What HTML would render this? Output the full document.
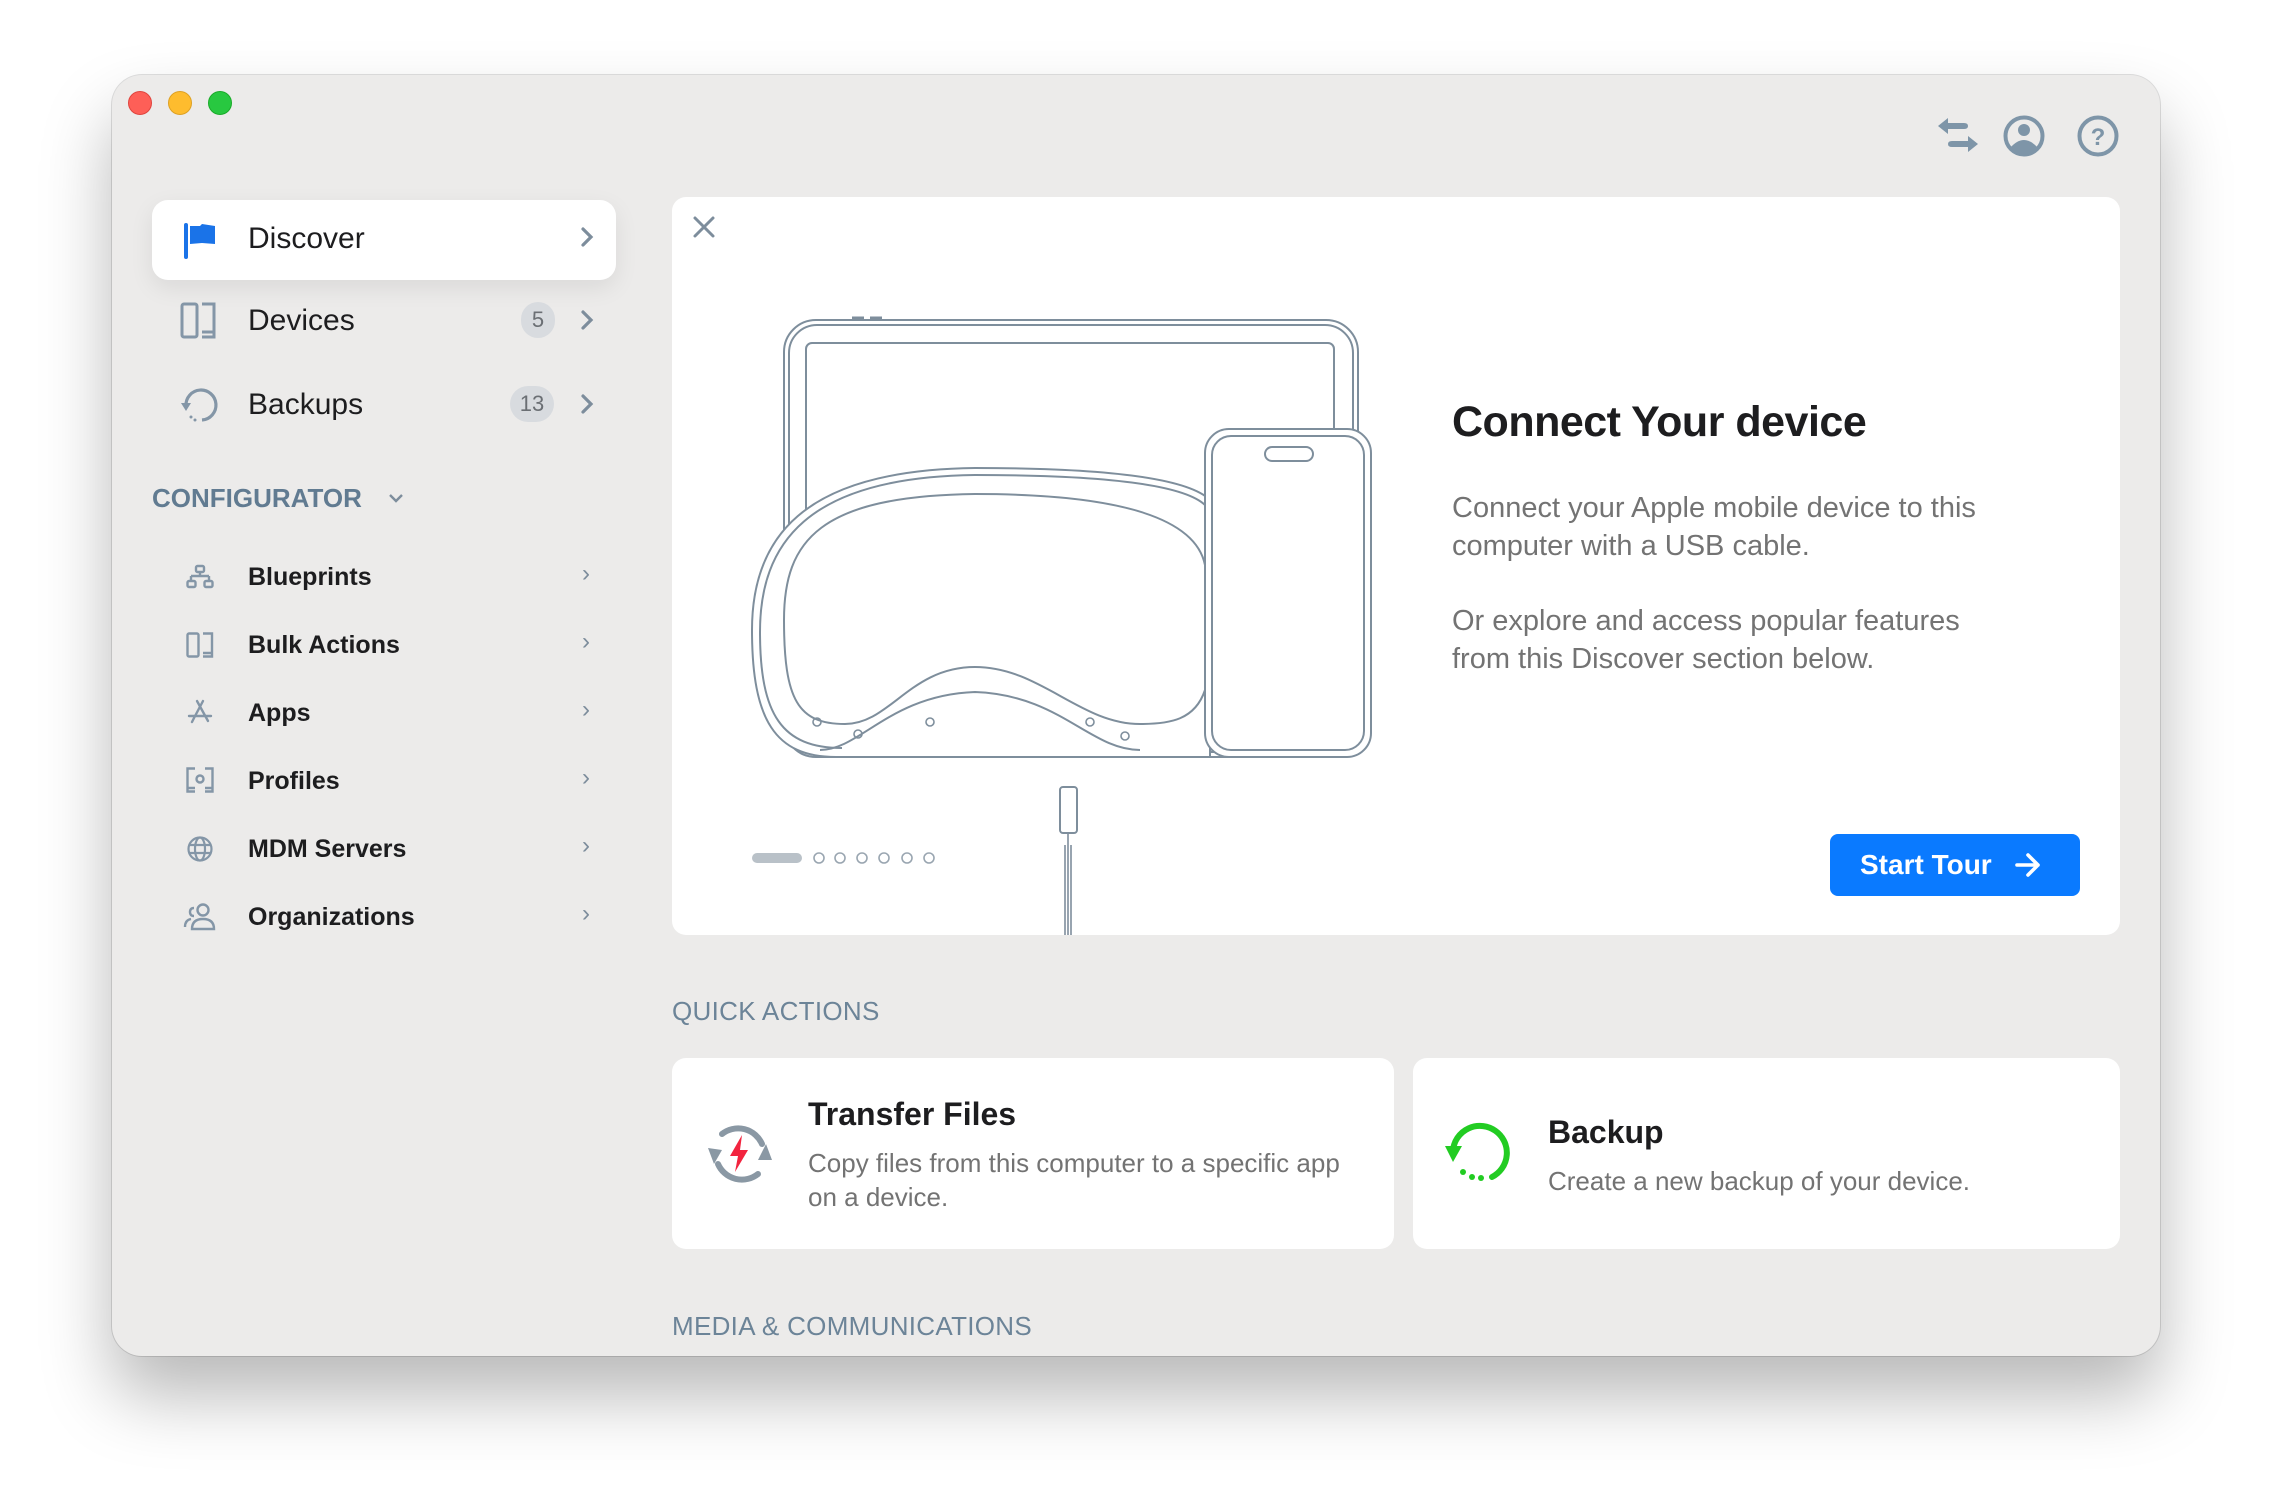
<!DOCTYPE html>
<html><head><meta charset="utf-8"><style>
*{margin:0;padding:0;box-sizing:border-box}
body{width:2272px;height:1504px;background:#fff;font-family:"Liberation Sans",sans-serif;position:relative;overflow:hidden}
.win{position:absolute;left:112px;top:75px;width:2048px;height:1281px;background:#ecebea;border-radius:30px;box-shadow:0 40px 70px rgba(0,0,0,.28),0 0 0 1px rgba(0,0,0,.12);overflow:hidden}
.a{position:absolute}
.tl{position:absolute;top:91px;width:24px;height:24px;border-radius:50%}
.side{position:absolute;font-size:30px;color:#1d1d1f}
.cfg{font-size:25px;font-weight:bold;color:#1d1d1f}
.chev{position:absolute;color:#7d8d9c}
.badge{position:absolute;height:36px;border-radius:18px;background:#d8dbdf;color:#6b6f74;font-size:22px;text-align:center;line-height:36px}
.card{position:absolute;background:#fff;border-radius:14px}
.gray{color:#737373}
.hdr{position:absolute;font-size:26px;color:#6c8498;letter-spacing:.3px}
</style></head><body>
<div class="win"></div>
<div class="tl" style="left:128px;background:#fe5f57;border:1px solid #e0443e"></div>
<div class="tl" style="left:168px;background:#febc2e;border:1px solid #dea123"></div>
<div class="tl" style="left:208px;background:#28c840;border:1px solid #1aab29"></div>

<svg class="a" style="left:1936px;top:114px" width="190" height="46" viewBox="0 0 190 46">
 <g fill="#7e95a8">
  <path d="M2 12 L12 4 L12 9 L28 9 Q32 9 32 12 Q32 15 28 15 L12 15 L12 20 Z"/>
  <path d="M42 30 L32 22 L32 27 L16 27 Q12 27 12 30 Q12 33 16 33 L32 33 L32 38 Z"/>
 </g>
 <circle cx="88" cy="22" r="18.5" fill="none" stroke="#7e95a8" stroke-width="4"/>
 <circle cx="88" cy="16" r="6" fill="#7e95a8"/>
 <path d="M74 34 Q88 18 102 34 Q88 46 74 34Z" fill="#7e95a8"/>
 <circle cx="162" cy="22" r="18.5" fill="none" stroke="#7e95a8" stroke-width="4"/>
 <text x="162" y="31" text-anchor="middle" font-family="Liberation Sans" font-weight="bold" font-size="24" fill="#7e95a8">?</text>
</svg>

<div class="a" style="left:152px;top:200px;width:464px;height:80px;background:#fff;border-radius:16px;box-shadow:0 8px 24px rgba(0,0,0,.08)"></div>
<svg class="a" style="left:182px;top:222px" width="36" height="38" viewBox="0 0 36 38"><rect x="2" y="1" width="4" height="36" rx="2" fill="#1a73e8"/><path d="M8 4 L18 4 L20 2 L33 4 L33 22 L20 21 L8 22Z" fill="#1a73e8"/></svg>
<div class="side" style="left:248px;top:222px">Discover</div>
<svg class="a" style="left:580px;top:226px" width="14" height="22" viewBox="0 0 14 22"><path d="M3 3 L11 11 L3 19" fill="none" stroke="#7d8d9c" stroke-width="3.2" stroke-linecap="round"/></svg>

<svg class="a" style="left:180px;top:302px" width="38" height="38" viewBox="0 0 38 38" fill="none" stroke="#8496a7" stroke-width="3"><rect x="2" y="2" width="15" height="33" rx="2"/><path d="M22 2 H34 V35 H22"/><path d="M22 30 H34" /></svg>
<div class="side" style="left:248px;top:304px">Devices</div>
<div class="badge" style="left:521px;top:302px;width:34px">5</div>
<svg class="a" style="left:580px;top:309px" width="14" height="22" viewBox="0 0 14 22"><path d="M3 3 L11 11 L3 19" fill="none" stroke="#7d8d9c" stroke-width="3.2" stroke-linecap="round"/></svg>

<svg class="a" style="left:178px;top:384px" width="42" height="42" viewBox="0 0 42 42" fill="none" stroke="#8496a7" stroke-width="3.2"><path d="M8 22 A15 15 0 1 1 24 36"/><path d="M3 19 L8 27 L13 19" fill="#8496a7" stroke="none"/><circle cx="13" cy="33" r="1.5" fill="#8496a7" stroke="none"/><circle cx="17" cy="36" r="1.5" fill="#8496a7" stroke="none"/></svg>
<div class="side" style="left:248px;top:388px">Backups</div>
<div class="badge" style="left:510px;top:386px;width:44px">13</div>
<svg class="a" style="left:580px;top:393px" width="14" height="22" viewBox="0 0 14 22"><path d="M3 3 L11 11 L3 19" fill="none" stroke="#7d8d9c" stroke-width="3.2" stroke-linecap="round"/></svg>

<div class="a" style="left:152px;top:483px;font-size:26px;font-weight:bold;color:#617b91">CONFIGURATOR</div>
<svg class="a" style="left:388px;top:492px" width="16" height="12" viewBox="0 0 16 12"><path d="M2 3 L8 9 L14 3" fill="none" stroke="#7d8d9c" stroke-width="2.4"/></svg>

<svg class="a" style="left:186px;top:564px" width="28" height="26" viewBox="0 0 28 26" fill="none" stroke="#8496a7" stroke-width="2.4"><rect x="10" y="2" width="8" height="6" rx="1.5"/><path d="M14 8 V12 M5 12 H23 M5 12 V17 M23 12 V17"/><rect x="1.5" y="17" width="8" height="6" rx="1.5"/><rect x="18.5" y="17" width="8" height="6" rx="1.5"/></svg>
<div class="a cfg" style="left:248px;top:563px">Blueprints</div>
<svg class="a" style="left:186px;top:632px" width="28" height="26" viewBox="0 0 28 26" fill="none" stroke="#8496a7" stroke-width="2.4"><rect x="1.5" y="1.5" width="11" height="23" rx="1.5"/><path d="M17 1.5 H26 V24.5 H17 M17 21 H26"/></svg>
<div class="a cfg" style="left:248px;top:631px">Bulk Actions</div>
<svg class="a" style="left:186px;top:699px" width="28" height="26" viewBox="0 0 28 26" fill="none" stroke="#8496a7" stroke-width="2.4" stroke-linecap="round"><path d="M11 2 L22 22 M17 2 L8 19 M3 17 H25 M6 23 L8 19"/></svg>
<div class="a cfg" style="left:248px;top:699px">Apps</div>
<svg class="a" style="left:186px;top:767px" width="28" height="26" viewBox="0 0 28 26" fill="none" stroke="#8496a7" stroke-width="2.4"><path d="M9 1.5 H1.5 V24.5 H9 M19 1.5 H26.5 V24.5 H19 M1.5 21 H9 M19 21 H26.5"/><circle cx="14" cy="12" r="3.5"/></svg>
<div class="a cfg" style="left:248px;top:767px">Profiles</div>
<svg class="a" style="left:186px;top:835px" width="28" height="28" viewBox="0 0 28 28" fill="none" stroke="#8496a7" stroke-width="2.2"><circle cx="14" cy="14" r="11.5"/><ellipse cx="14" cy="14" rx="5" ry="11.5"/><path d="M3 10 H25 M3 18 H25"/></svg>
<div class="a cfg" style="left:248px;top:835px">MDM Servers</div>
<svg class="a" style="left:183px;top:902px" width="34" height="30" viewBox="0 0 34 30" fill="none" stroke="#8496a7" stroke-width="2.4"><circle cx="20" cy="8" r="5.5"/><path d="M9 27 Q9 17 20 17 Q31 17 31 27 Z"/><path d="M11 6 Q7 6 7 10 Q7 14 11 14 M2 25 Q2 18 8 17"/></svg>
<div class="a cfg" style="left:248px;top:903px">Organizations</div>
<div class="chev" style="left:582px;top:560px;font-size:24px">›</div>
<div class="chev" style="left:582px;top:628px;font-size:24px">›</div>
<div class="chev" style="left:582px;top:696px;font-size:24px">›</div>
<div class="chev" style="left:582px;top:764px;font-size:24px">›</div>
<div class="chev" style="left:582px;top:832px;font-size:24px">›</div>
<div class="chev" style="left:582px;top:900px;font-size:24px">›</div>

<div class="card" style="left:672px;top:197px;width:1448px;height:738px"></div>
<svg class="a" style="left:692px;top:215px" width="24" height="24" viewBox="0 0 24 24"><path d="M3 3 L21 21 M21 3 L3 21" stroke="#7d8d9c" stroke-width="3" stroke-linecap="round"/></svg>

<svg class="a" style="left:672px;top:197px" width="760" height="738" viewBox="672 197 760 738" fill="none" stroke="#7e8e9c" stroke-width="2">
 <rect x="784" y="320" width="574" height="437" rx="32"/>
 <rect x="789" y="325" width="564" height="427" rx="28"/>
 <rect x="806" y="343" width="528" height="370" rx="6"/>
 <path d="M852 318 H864 M870 318 H882" stroke-width="3"/>
 <path fill="#fff" d="M836 757 C775 757 752 720 752 630 C752 540 800 470 975 468 C1120 468 1190 480 1210 500 L1210 757 Z"/>
 <path d="M842 748 C782 748 760 715 760 632 C760 545 805 477 975 475 C1115 475 1185 486 1205 505"/>
 <path d="M845 724 C798 724 784 700 784 620 C784 540 820 496 975 494 C1110 494 1195 515 1205 565 L1205 690 C1195 720 1170 724 1140 724 C1080 724 1040 667 975 667 C910 667 890 724 845 724 Z"/>
 <path d="M820 750 C860 750 890 695 975 692 C1060 695 1090 750 1140 750"/>
 <g stroke-width="1.6"><circle cx="817" cy="722" r="4"/><circle cx="858" cy="734" r="4"/><circle cx="930" cy="722" r="4"/><circle cx="1090" cy="722" r="4"/><circle cx="1125" cy="736" r="4"/></g>
 <rect fill="#fff" x="1205" y="429" width="166" height="328" rx="24"/>
 <rect x="1212" y="436" width="152" height="314" rx="19"/>
 <rect x="1265" y="447" width="48" height="14" rx="7"/>
 <rect x="1060" y="787" width="17" height="46" rx="3"/>
 <path d="M1068 833 V935 M1065 845 V935 M1071 845 V935" stroke-width="1.6"/>
</svg>
<div class="a" style="left:752px;top:853px;width:50px;height:10px;border-radius:5px;background:#b9c1c8"></div>
<svg class="a" style="left:812px;top:850px" width="130" height="16" viewBox="0 0 130 16" fill="none" stroke="#9aa6b1" stroke-width="1.6"><circle cx="7" cy="8" r="5"/><circle cx="28" cy="8" r="5"/><circle cx="50" cy="8" r="5"/><circle cx="72" cy="8" r="5"/><circle cx="95" cy="8" r="5"/><circle cx="117" cy="8" r="5"/></svg>

<div class="a" style="left:1452px;top:398px;font-size:43px;font-weight:bold;color:#1d1d1f;letter-spacing:-.5px">Connect Your device</div>
<div class="a gray" style="left:1452px;top:489px;font-size:29px;line-height:38px;width:590px">Connect your Apple mobile device to this computer with a USB cable.</div>
<div class="a gray" style="left:1452px;top:602px;font-size:29px;line-height:38px;width:560px">Or explore and access popular features from this Discover section below.</div>
<div class="a" style="left:1830px;top:834px;width:250px;height:62px;background:#0a7aff;border-radius:8px"></div>
<div class="a" style="left:1860px;top:849px;font-size:28px;font-weight:bold;color:#fff">Start Tour</div>
<svg class="a" style="left:2014px;top:852px" width="28" height="26" viewBox="0 0 28 26"><path d="M3 13 H24 M14 3 L24 13 L14 23" fill="none" stroke="#fff" stroke-width="3.6" stroke-linecap="round" stroke-linejoin="round"/></svg>

<div class="hdr" style="left:672px;top:996px">QUICK ACTIONS</div>
<div class="card" style="left:672px;top:1058px;width:722px;height:191px"></div>
<div class="card" style="left:1413px;top:1058px;width:707px;height:191px"></div>
<svg class="a" style="left:700px;top:1114px" width="80" height="80" viewBox="0 0 80 80" fill="none">
 <path d="M62 30 A26 26 0 0 0 22 20" stroke="#8a98a4" stroke-width="6" stroke-linecap="round"/>
 <path d="M18 50 A26 26 0 0 0 58 60" stroke="#8a98a4" stroke-width="6" stroke-linecap="round"/>
 <path d="M8 34 L14 50 L22 36Z M58 46 L66 30 L72 46Z" fill="#8a98a4"/>
 <path d="M42 21 L30 42 L38 42 L35 58 L48 36 L40 36 Z" fill="#f2243f"/>
</svg>
<div class="a" style="left:808px;top:1096px;font-size:32px;font-weight:bold;color:#1d1d1f">Transfer Files</div>
<div class="a gray" style="left:808px;top:1146px;font-size:26px;line-height:34px;width:565px">Copy files from this computer to a specific app on a device.</div>
<svg class="a" style="left:1440px;top:1116px" width="80" height="76" viewBox="0 0 80 76" fill="none">
 <path d="M13 34 A27 27 0 1 1 52 61" stroke="#22cc22" stroke-width="6" stroke-linecap="round"/>
 <path d="M5 30 L13 46 L22 30Z" fill="#22cc22"/>
 <circle cx="23" cy="56" r="3" fill="#22cc22"/><circle cx="32" cy="61" r="3" fill="#22cc22"/><circle cx="41" cy="62" r="3" fill="#22cc22"/>
</svg>
<div class="a" style="left:1548px;top:1114px;font-size:32px;font-weight:bold;color:#1d1d1f">Backup</div>
<div class="a gray" style="left:1548px;top:1164px;font-size:26px;line-height:34px">Create a new backup of your device.</div>
<div class="hdr" style="left:672px;top:1311px">MEDIA &amp; COMMUNICATIONS</div>
</body></html>
